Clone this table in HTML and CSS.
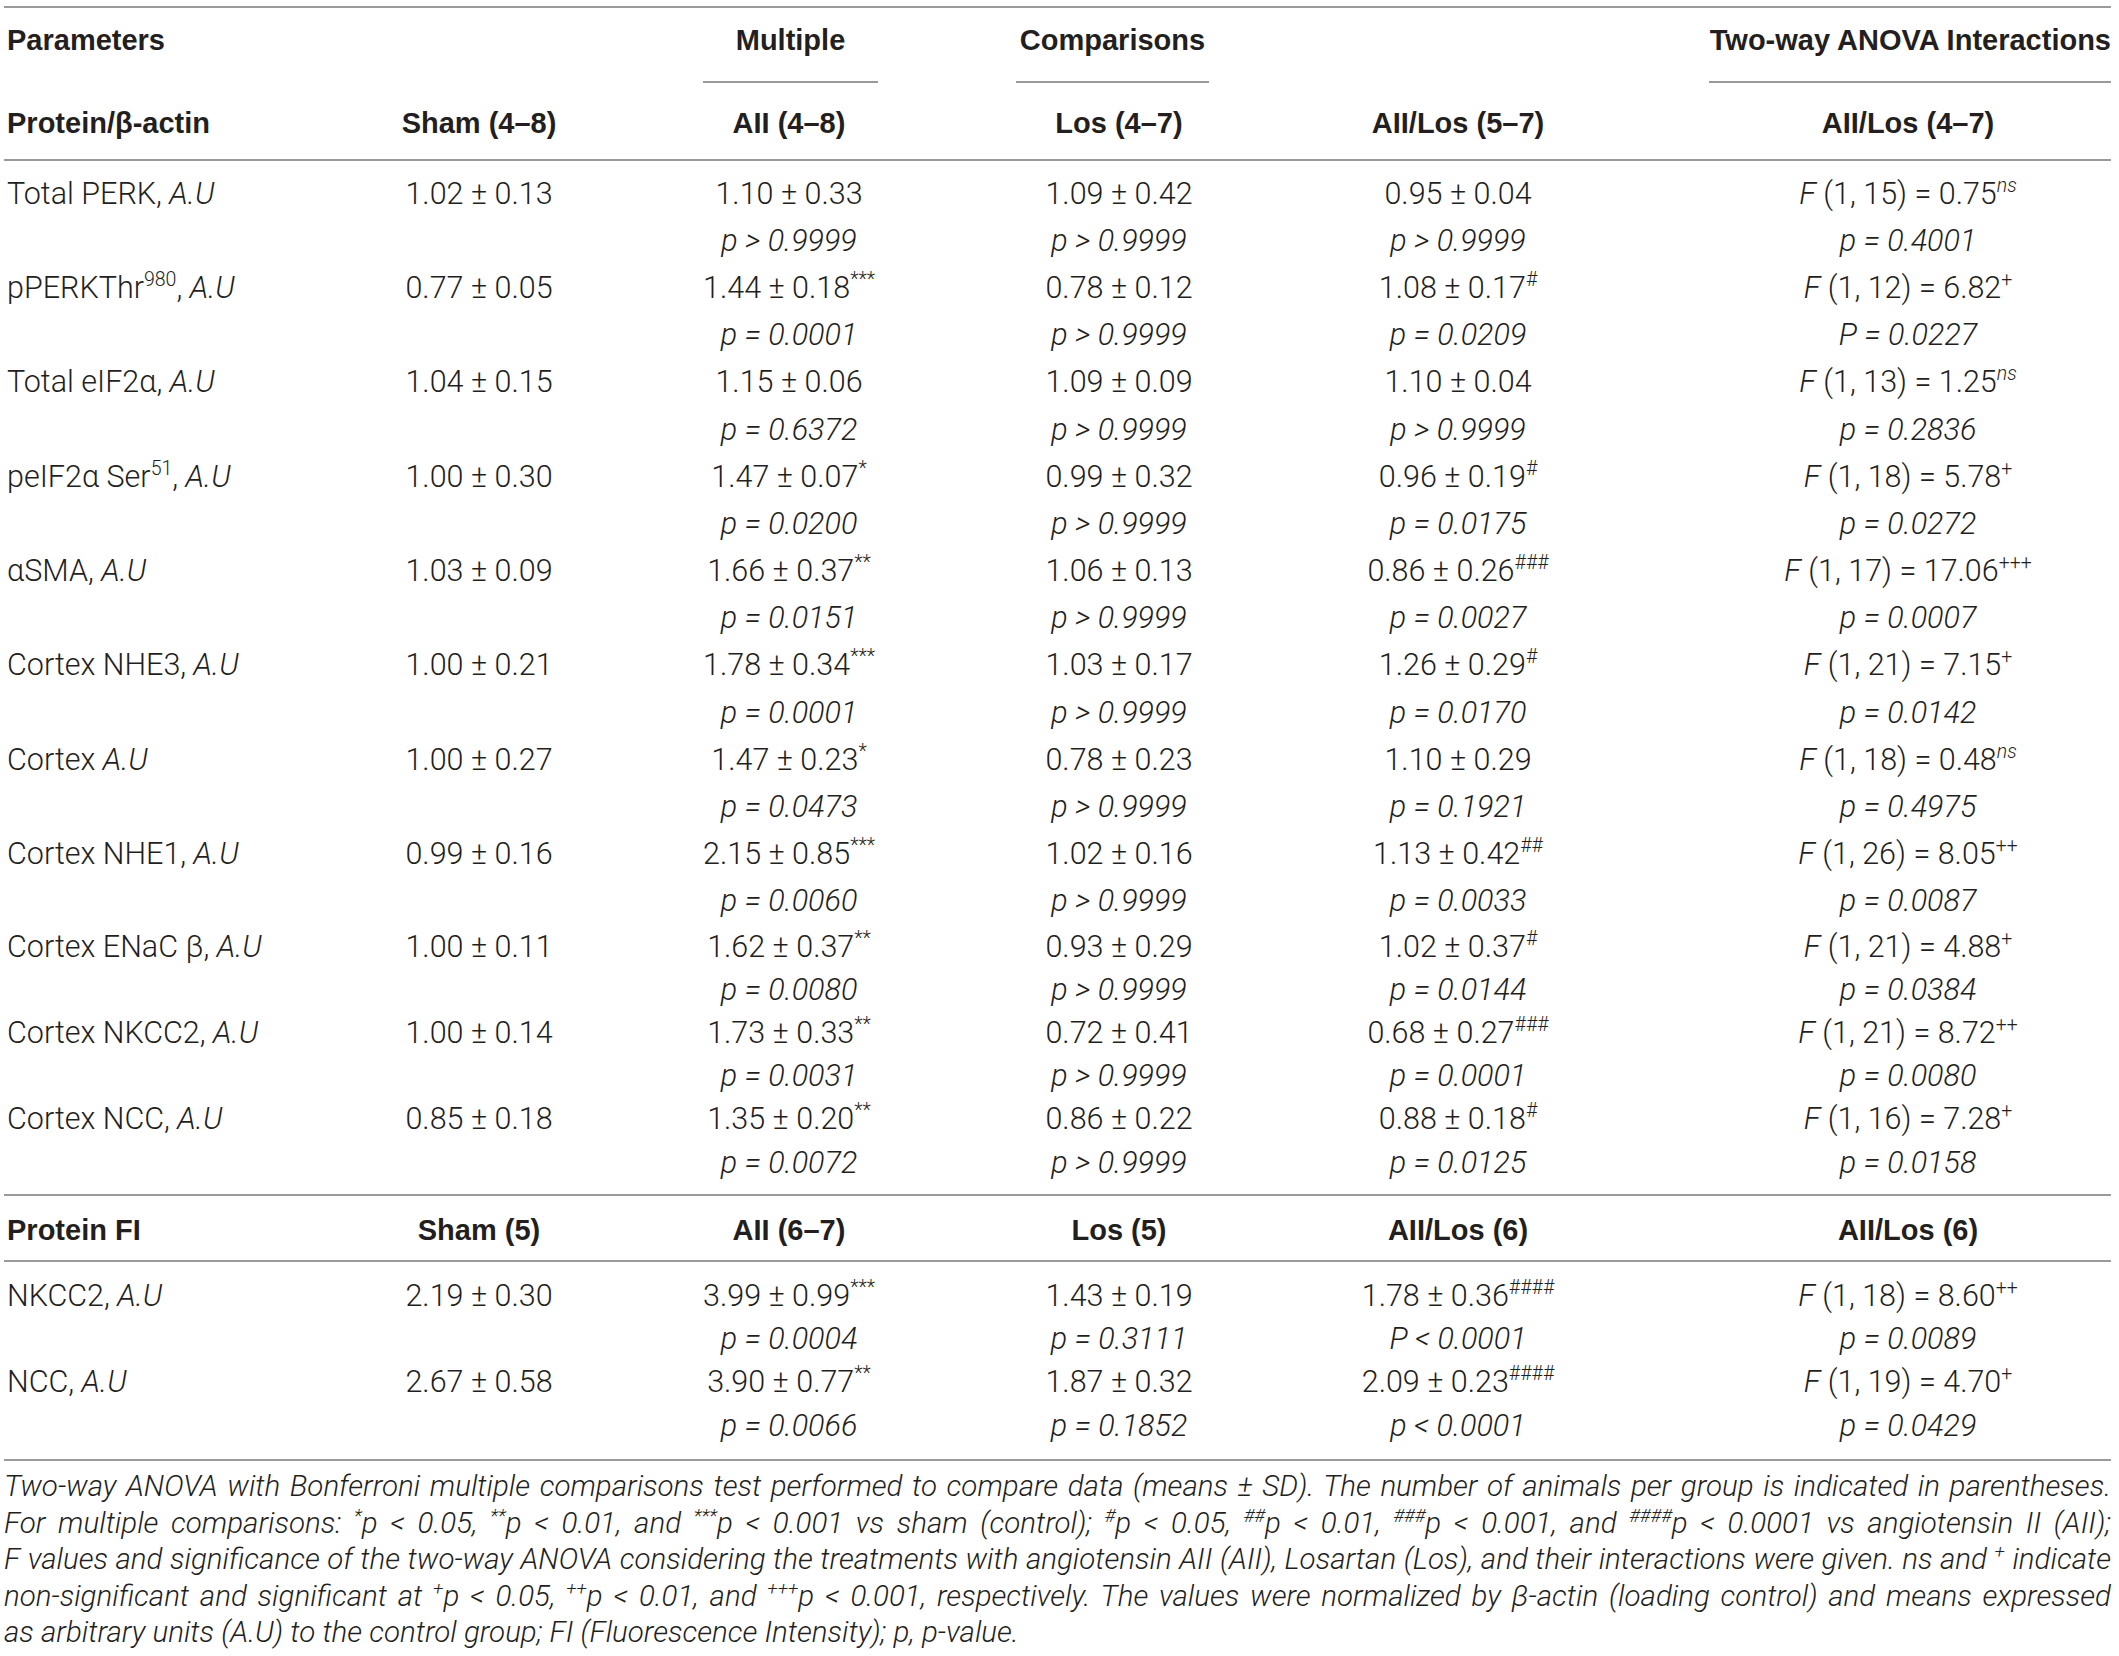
FILE: index.html
```html
<!DOCTYPE html>
<html lang="en">
<head>
<meta charset="utf-8">
<title>Table</title>
<link rel="stylesheet" href="styles.css">
</head>
<body>
<div class="tbl">
  <div class="row hr1">
    <div class="cell c0"><span class="hb">Parameters</span></div>
    <div class="cell c1"></div>
    <div class="cell c2"><div class="grp g-mult hb">Multiple</div></div>
    <div class="cell c3"><div class="grp g-comp hb">Comparisons</div></div>
    <div class="cell c4"></div>
    <div class="cell c5"><div class="grp g-anova hb">Two-way ANOVA Interactions</div></div>
  </div>
  <div class="row hr2">
    <div class="cell c0"><span class="hb">Protein/β-actin</span></div>
    <div class="cell c1"><span class="hb">Sham (4–8)</span></div>
    <div class="cell c2"><span class="hb">AII (4–8)</span></div>
    <div class="cell c3"><span class="hb">Los (4–7)</span></div>
    <div class="cell c4"><span class="hb">AII/Los (5–7)</span></div>
    <div class="cell c5"><span class="hb">AII/Los (4–7)</span></div>
  </div>

  <div class="sec sec1">
    <div class="row r1">
      <div class="cell c0"><div class="ln">Total PERK, <i>A.U</i></div></div>
      <div class="cell c1"><div class="ln">1.02 ± 0.13</div></div>
      <div class="cell c2"><div class="ln">1.10 ± 0.33</div><div class="ln"><i>p &gt; 0.9999</i></div></div>
      <div class="cell c3"><div class="ln">1.09 ± 0.42</div><div class="ln"><i>p &gt; 0.9999</i></div></div>
      <div class="cell c4"><div class="ln">0.95 ± 0.04</div><div class="ln"><i>p &gt; 0.9999</i></div></div>
      <div class="cell c5"><div class="ln"><i>F</i> (1, 15) = 0.75<sup class="s"><i>ns</i></sup></div><div class="ln"><i>p = 0.4001</i></div></div>
    </div>
    <div class="row r1">
      <div class="cell c0"><div class="ln">pPERKThr<sup class="s">980</sup>, <i>A.U</i></div></div>
      <div class="cell c1"><div class="ln">0.77 ± 0.05</div></div>
      <div class="cell c2"><div class="ln">1.44 ± 0.18<sup class="s">***</sup></div><div class="ln"><i>p = 0.0001</i></div></div>
      <div class="cell c3"><div class="ln">0.78 ± 0.12</div><div class="ln"><i>p &gt; 0.9999</i></div></div>
      <div class="cell c4"><div class="ln">1.08 ± 0.17<sup class="s">#</sup></div><div class="ln"><i>p = 0.0209</i></div></div>
      <div class="cell c5"><div class="ln"><i>F</i> (1, 12) = 6.82<sup class="s">+</sup></div><div class="ln"><i>P = 0.0227</i></div></div>
    </div>
    <div class="row r1">
      <div class="cell c0"><div class="ln">Total eIF2α, <i>A.U</i></div></div>
      <div class="cell c1"><div class="ln">1.04 ± 0.15</div></div>
      <div class="cell c2"><div class="ln">1.15 ± 0.06</div><div class="ln"><i>p = 0.6372</i></div></div>
      <div class="cell c3"><div class="ln">1.09 ± 0.09</div><div class="ln"><i>p &gt; 0.9999</i></div></div>
      <div class="cell c4"><div class="ln">1.10 ± 0.04</div><div class="ln"><i>p &gt; 0.9999</i></div></div>
      <div class="cell c5"><div class="ln"><i>F</i> (1, 13) = 1.25<sup class="s"><i>ns</i></sup></div><div class="ln"><i>p = 0.2836</i></div></div>
    </div>
    <div class="row r1">
      <div class="cell c0"><div class="ln">peIF2α Ser<sup class="s">51</sup>, <i>A.U</i></div></div>
      <div class="cell c1"><div class="ln">1.00 ± 0.30</div></div>
      <div class="cell c2"><div class="ln">1.47 ± 0.07<sup class="s">*</sup></div><div class="ln"><i>p = 0.0200</i></div></div>
      <div class="cell c3"><div class="ln">0.99 ± 0.32</div><div class="ln"><i>p &gt; 0.9999</i></div></div>
      <div class="cell c4"><div class="ln">0.96 ± 0.19<sup class="s">#</sup></div><div class="ln"><i>p = 0.0175</i></div></div>
      <div class="cell c5"><div class="ln"><i>F</i> (1, 18) = 5.78<sup class="s">+</sup></div><div class="ln"><i>p = 0.0272</i></div></div>
    </div>
    <div class="row r1">
      <div class="cell c0"><div class="ln">αSMA, <i>A.U</i></div></div>
      <div class="cell c1"><div class="ln">1.03 ± 0.09</div></div>
      <div class="cell c2"><div class="ln">1.66 ± 0.37<sup class="s">**</sup></div><div class="ln"><i>p = 0.0151</i></div></div>
      <div class="cell c3"><div class="ln">1.06 ± 0.13</div><div class="ln"><i>p &gt; 0.9999</i></div></div>
      <div class="cell c4"><div class="ln">0.86 ± 0.26<sup class="s">###</sup></div><div class="ln"><i>p = 0.0027</i></div></div>
      <div class="cell c5"><div class="ln"><i>F</i> (1, 17) = 17.06<sup class="s">+++</sup></div><div class="ln"><i>p = 0.0007</i></div></div>
    </div>
    <div class="row r1">
      <div class="cell c0"><div class="ln">Cortex NHE3, <i>A.U</i></div></div>
      <div class="cell c1"><div class="ln">1.00 ± 0.21</div></div>
      <div class="cell c2"><div class="ln">1.78 ± 0.34<sup class="s">***</sup></div><div class="ln"><i>p = 0.0001</i></div></div>
      <div class="cell c3"><div class="ln">1.03 ± 0.17</div><div class="ln"><i>p &gt; 0.9999</i></div></div>
      <div class="cell c4"><div class="ln">1.26 ± 0.29<sup class="s">#</sup></div><div class="ln"><i>p = 0.0170</i></div></div>
      <div class="cell c5"><div class="ln"><i>F</i> (1, 21) = 7.15<sup class="s">+</sup></div><div class="ln"><i>p = 0.0142</i></div></div>
    </div>
    <div class="row r1">
      <div class="cell c0"><div class="ln">Cortex <i>A.U</i></div></div>
      <div class="cell c1"><div class="ln">1.00 ± 0.27</div></div>
      <div class="cell c2"><div class="ln">1.47 ± 0.23<sup class="s">*</sup></div><div class="ln"><i>p = 0.0473</i></div></div>
      <div class="cell c3"><div class="ln">0.78 ± 0.23</div><div class="ln"><i>p &gt; 0.9999</i></div></div>
      <div class="cell c4"><div class="ln">1.10 ± 0.29</div><div class="ln"><i>p = 0.1921</i></div></div>
      <div class="cell c5"><div class="ln"><i>F</i> (1, 18) = 0.48<sup class="s"><i>ns</i></sup></div><div class="ln"><i>p = 0.4975</i></div></div>
    </div>
    <div class="row r1">
      <div class="cell c0"><div class="ln">Cortex NHE1, <i>A.U</i></div></div>
      <div class="cell c1"><div class="ln">0.99 ± 0.16</div></div>
      <div class="cell c2"><div class="ln">2.15 ± 0.85<sup class="s">***</sup></div><div class="ln"><i>p = 0.0060</i></div></div>
      <div class="cell c3"><div class="ln">1.02 ± 0.16</div><div class="ln"><i>p &gt; 0.9999</i></div></div>
      <div class="cell c4"><div class="ln">1.13 ± 0.42<sup class="s">##</sup></div><div class="ln"><i>p = 0.0033</i></div></div>
      <div class="cell c5"><div class="ln"><i>F</i> (1, 26) = 8.05<sup class="s">++</sup></div><div class="ln"><i>p = 0.0087</i></div></div>
    </div>
    <div class="row r2">
      <div class="cell c0"><div class="ln">Cortex ENaC β, <i>A.U</i></div></div>
      <div class="cell c1"><div class="ln">1.00 ± 0.11</div></div>
      <div class="cell c2"><div class="ln">1.62 ± 0.37<sup class="s">**</sup></div><div class="ln"><i>p = 0.0080</i></div></div>
      <div class="cell c3"><div class="ln">0.93 ± 0.29</div><div class="ln"><i>p &gt; 0.9999</i></div></div>
      <div class="cell c4"><div class="ln">1.02 ± 0.37<sup class="s">#</sup></div><div class="ln"><i>p = 0.0144</i></div></div>
      <div class="cell c5"><div class="ln"><i>F</i> (1, 21) = 4.88<sup class="s">+</sup></div><div class="ln"><i>p = 0.0384</i></div></div>
    </div>
    <div class="row r2">
      <div class="cell c0"><div class="ln">Cortex NKCC2, <i>A.U</i></div></div>
      <div class="cell c1"><div class="ln">1.00 ± 0.14</div></div>
      <div class="cell c2"><div class="ln">1.73 ± 0.33<sup class="s">**</sup></div><div class="ln"><i>p = 0.0031</i></div></div>
      <div class="cell c3"><div class="ln">0.72 ± 0.41</div><div class="ln"><i>p &gt; 0.9999</i></div></div>
      <div class="cell c4"><div class="ln">0.68 ± 0.27<sup class="s">###</sup></div><div class="ln"><i>p = 0.0001</i></div></div>
      <div class="cell c5"><div class="ln"><i>F</i> (1, 21) = 8.72<sup class="s">++</sup></div><div class="ln"><i>p = 0.0080</i></div></div>
    </div>
    <div class="row r2">
      <div class="cell c0"><div class="ln">Cortex NCC, <i>A.U</i></div></div>
      <div class="cell c1"><div class="ln">0.85 ± 0.18</div></div>
      <div class="cell c2"><div class="ln">1.35 ± 0.20<sup class="s">**</sup></div><div class="ln"><i>p = 0.0072</i></div></div>
      <div class="cell c3"><div class="ln">0.86 ± 0.22</div><div class="ln"><i>p &gt; 0.9999</i></div></div>
      <div class="cell c4"><div class="ln">0.88 ± 0.18<sup class="s">#</sup></div><div class="ln"><i>p = 0.0125</i></div></div>
      <div class="cell c5"><div class="ln"><i>F</i> (1, 16) = 7.28<sup class="s">+</sup></div><div class="ln"><i>p = 0.0158</i></div></div>
    </div>
  </div>

  <div class="row hr3">
    <div class="cell c0"><span class="hb">Protein FI</span></div>
    <div class="cell c1"><span class="hb">Sham (5)</span></div>
    <div class="cell c2"><span class="hb">AII (6–7)</span></div>
    <div class="cell c3"><span class="hb">Los (5)</span></div>
    <div class="cell c4"><span class="hb">AII/Los (6)</span></div>
    <div class="cell c5"><span class="hb">AII/Los (6)</span></div>
  </div>

  <div class="sec sec2">
    <div class="row r2">
      <div class="cell c0"><div class="ln">NKCC2, <i>A.U</i></div></div>
      <div class="cell c1"><div class="ln">2.19 ± 0.30</div></div>
      <div class="cell c2"><div class="ln">3.99 ± 0.99<sup class="s">***</sup></div><div class="ln"><i>p = 0.0004</i></div></div>
      <div class="cell c3"><div class="ln">1.43 ± 0.19</div><div class="ln"><i>p = 0.3111</i></div></div>
      <div class="cell c4"><div class="ln">1.78 ± 0.36<sup class="s">####</sup></div><div class="ln"><i>P &lt; 0.0001</i></div></div>
      <div class="cell c5"><div class="ln"><i>F</i> (1, 18) = 8.60<sup class="s">++</sup></div><div class="ln"><i>p = 0.0089</i></div></div>
    </div>
    <div class="row r2">
      <div class="cell c0"><div class="ln">NCC, <i>A.U</i></div></div>
      <div class="cell c1"><div class="ln">2.67 ± 0.58</div></div>
      <div class="cell c2"><div class="ln">3.90 ± 0.77<sup class="s">**</sup></div><div class="ln"><i>p = 0.0066</i></div></div>
      <div class="cell c3"><div class="ln">1.87 ± 0.32</div><div class="ln"><i>p = 0.1852</i></div></div>
      <div class="cell c4"><div class="ln">2.09 ± 0.23<sup class="s">####</sup></div><div class="ln"><i>p &lt; 0.0001</i></div></div>
      <div class="cell c5"><div class="ln"><i>F</i> (1, 19) = 4.70<sup class="s">+</sup></div><div class="ln"><i>p = 0.0429</i></div></div>
    </div>
  </div>

  <div class="fn">
    <div class="fl">Two-way ANOVA with Bonferroni multiple comparisons test performed to compare data (means ± SD). The number of animals per group is indicated in parentheses.</div>
    <div class="fl">For multiple comparisons: <sup class="s">*</sup>p &lt; 0.05, <sup class="s">**</sup>p &lt; 0.01, and <sup class="s">***</sup>p &lt; 0.001 vs sham (control); <sup class="s">#</sup>p &lt; 0.05, <sup class="s">##</sup>p &lt; 0.01, <sup class="s">###</sup>p &lt; 0.001, and <sup class="s">####</sup>p &lt; 0.0001 vs angiotensin II (AII);</div>
    <div class="fl">F values and significance of the two-way ANOVA considering the treatments with angiotensin AII (AII), Losartan (Los), and their interactions were given. ns and <sup class="s">+</sup> indicate</div>
    <div class="fl">non-significant and significant at <sup class="s">+</sup>p &lt; 0.05, <sup class="s">++</sup>p &lt; 0.01, and <sup class="s">+++</sup>p &lt; 0.001, respectively. The values were normalized by β-actin (loading control) and means expressed</div>
    <div class="fl last">as arbitrary units (A.U) to the control group; FI (Fluorescence Intensity); p, p-value.</div>
  </div>
</div>
</body>
</html>
```

FILE: styles.css
```css
body {
  margin: 0;
  background: #ffffff;
  color: #231f20;
  font-family: Roboto, "Liberation Sans", sans-serif;
  font-weight: 300;
  font-size: 30.5px;
}

.tbl {
  margin: 6px 0 0 4px;
  width: 2107px;
  border-top: 2px solid #9a9a9a;
}

.row {
  display: grid;
  grid-template-columns: 410px 130px 490px 170px 501px 406px;
}

.cell {
  display: flex;
  flex-direction: column;
  align-items: center;
  white-space: nowrap;
  min-width: 0;
}

.c0 {
  align-items: flex-start;
  padding-left: 3px;
}

.c4 {
  padding-left: 7px;
}

.hb {
  font-family: "Liberation Sans", Arial, sans-serif;
  font-weight: 700;
  font-size: 29px;
  line-height: 40px;
  height: 40px;
  display: block;
}

.hr1 {
  padding-top: 12px;
}

.grp {
  border-bottom: 2px solid #9a9a9a;
  padding-bottom: 21px;
  text-align: center;
}

.c2 .g-mult,
.c3 .g-comp,
.c5 .g-anova {
  align-self: flex-start;
}

.g-mult {
  margin-left: 159px;
  width: 175px;
}

.g-comp {
  margin-left: -18px;
  width: 193px;
}

.g-anova {
  margin-left: 4px;
  width: 402px;
  text-align: right;
}

.hr2 {
  padding: 20px 0 16px;
  border-bottom: 2px solid #9a9a9a;
}

.sec1 {
  padding: 8.6px 0 10px;
  border-bottom: 2px solid #9a9a9a;
}

.hr3 {
  padding: 14px 0 10px;
  border-bottom: 2px solid #9a9a9a;
}

.sec2 {
  padding: 12.4px 0 11.8px;
  border-bottom: 2px solid #9a9a9a;
}

.r1 { --lh: 47.2px; }
.r2 { --lh: 43.2px; }

.ln {
  height: var(--lh);
  line-height: var(--lh);
}

.s {
  font-size: 0.64em;
  vertical-align: 0.6em;
  line-height: 0;
}

.fn {
  padding-top: 7.75px;
  font-style: italic;
  font-size: 29.5px;
  line-height: 36.5px;
}

.fl {
  text-align: justify;
  text-align-last: justify;
}

.fl.last {
  text-align-last: left;
}
```
